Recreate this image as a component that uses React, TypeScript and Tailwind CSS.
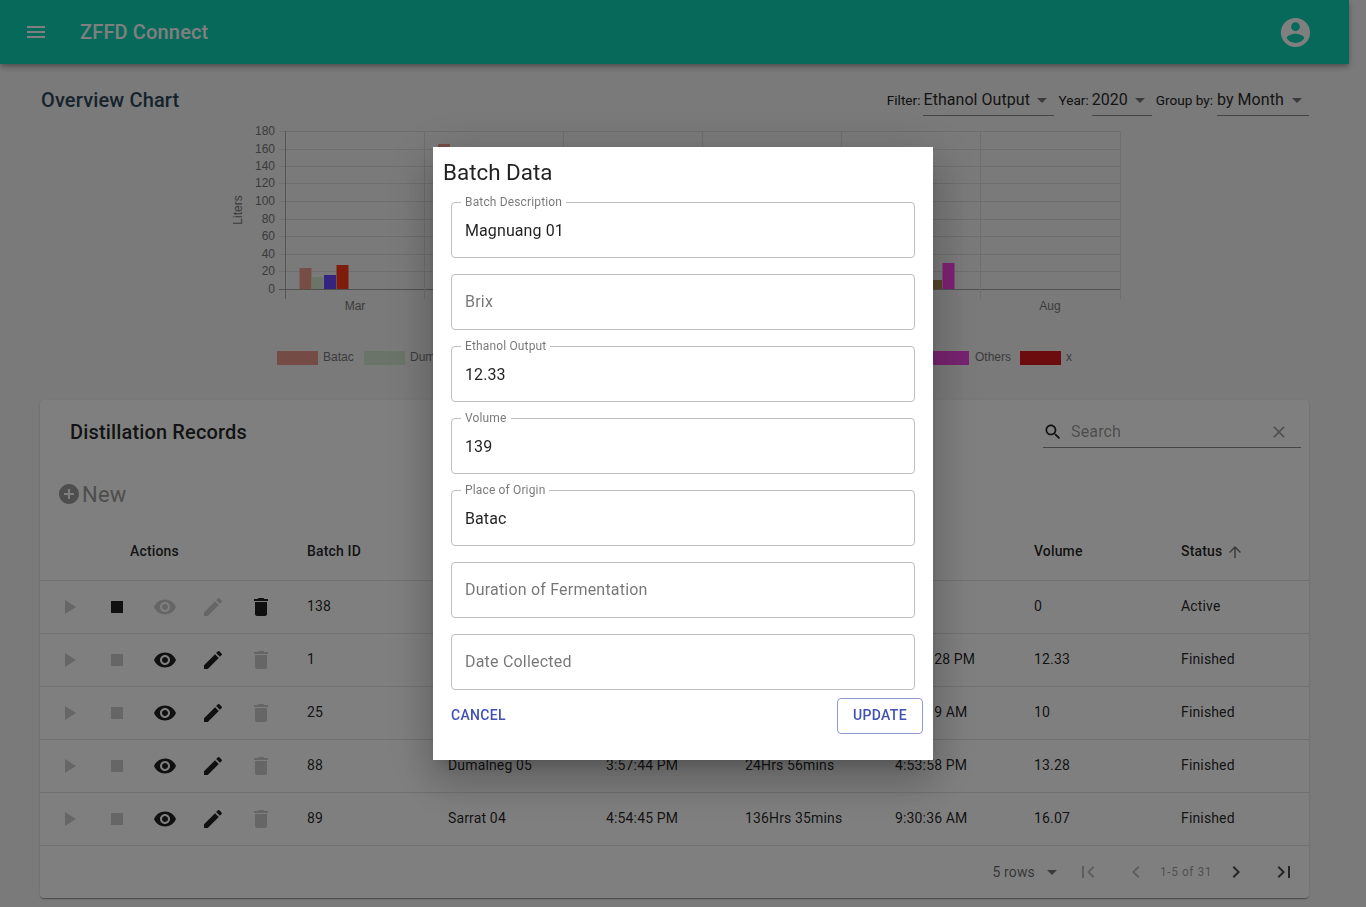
const FONT = "font-['Roboto','Liberation_Sans',sans-serif]";

// ─── Icons (material paths) ──────────────────────────────────────────────────
const P = {
  menu: "M3 18h18v-2H3v2zm0-5h18v-2H3v2zm0-7v2h18V6H3z",
  account:
    "M12 2C6.48 2 2 6.48 2 12s4.48 10 10 10 10-4.48 10-10S17.52 2 12 2zm0 3c1.66 0 3 1.34 3 3s-1.34 3-3 3-3-1.34-3-3 1.34-3 3-3zm0 14.2c-2.5 0-4.71-1.28-6-3.22.03-1.99 4-3.08 6-3.08 1.99 0 5.97 1.09 6 3.08-1.29 1.94-3.5 3.22-6 3.22z",
  drop: "M7 10l5 5 5-5z",
  search:
    "M15.5 14h-.79l-.28-.27C15.41 12.59 16 11.11 16 9.5 16 5.91 13.09 3 9.5 3S3 5.91 3 9.5 5.91 16 9.5 16c1.61 0 3.09-.59 4.23-1.57l.27.28v.79l5 4.99L20.49 19l-4.99-5zm-6 0C7.01 14 5 11.99 5 9.5S7.01 5 9.5 5 14 7.01 14 9.5 11.99 14 9.5 14z",
  clear:
    "M19 6.41L17.59 5 12 10.59 6.41 5 5 6.41 10.59 12 5 17.59 6.41 19 12 13.41 17.59 19 19 17.59 13.41 12z",
  add: "M12 2C6.48 2 2 6.48 2 12s4.48 10 10 10 10-4.48 10-10S17.52 2 12 2zm5 11h-4v4h-2v-4H7v-2h4V7h2v4h4v2z",
  up: "M4 12l1.41 1.41L11 7.83V20h2V7.83l5.58 5.59L20 12l-8-8-8 8z",
  play: "M8 5v14l11-7z",
  stop: "M6 6h12v12H6z",
  eye: "M12 4.5C7 4.5 2.73 7.61 1 12c1.73 4.39 6 7.5 11 7.5s9.27-3.11 11-7.5c-1.73-4.39-6-7.5-11-7.5zM12 17c-2.76 0-5-2.24-5-5s2.24-5 5-5 5 2.24 5 5-2.24 5-5 5zm0-8c-1.66 0-3 1.34-3 3s1.34 3 3 3 3-1.34 3-3-1.34-3-3-3z",
  edit: "M3 17.25V21h3.75L17.81 9.94l-3.75-3.75L3 17.25zM20.71 7.04c.39-.39.39-1.02 0-1.41l-2.34-2.34c-.39-.39-1.02-.39-1.41 0l-1.83 1.83 3.75 3.75 1.83-1.83z",
  trash: "M6 19c0 1.1.9 2 2 2h8c1.1 0 2-.9 2-2V7H6v12zM19 4h-3.5l-1-1h-5l-1 1H5v2h14V4z",
  first: "M18.41 16.59L13.82 12l4.59-4.59L17 6l-6 6 6 6zM6 6h2v12H6z",
  prev: "M15.41 7.41L14 6l-6 6 6 6 1.41-1.41L10.83 12z",
  next: "M10 6L8.59 7.41 13.17 12l-4.58 4.59L10 18l6-6z",
  last: "M5.59 7.41L10.18 12l-4.59 4.59L7 18l6-6-6-6zM16 6h2v12h-2z",
};

function Icon({ d, size = 24, className = "" }: { d: string; size?: number; className?: string }) {
  return (
    <svg width={size} height={size} viewBox="0 0 24 24" fill="currentColor" className={`shrink-0 ${className}`}>
      <path d={d} />
    </svg>
  );
}

// ─── Chart ───────────────────────────────────────────────────────────────────
const TICKS = [
  [180, 131],
  [160, 149],
  [140, 166],
  [120, 183],
  [100, 201],
  [80, 219],
  [60, 236],
  [40, 254],
  [20, 271],
  [0, 289],
];
const VLINES = [285.5, 424.5, 563.5, 702.5, 841.5, 980.5, 1120.5];
const BARS = [
  [299.5, 268, 12, "#ec9c8c"],
  [311.5, 277, 12, "#d5e8d0"],
  [324, 275, 12, "#6a48ff"],
  [336.5, 265, 12, "#ff3a18"],
  [438, 144, 12, "#ec9c8c"],
  [925, 280, 17, "#a88f50"],
  [942.5, 263, 12, "#ff40e8"],
] as const;
const LEGEND = [
  [277, "Batac", "#e8998a", 323],
  [364, "Dumalneg", "#d5e8d0", 410],
  [928, "Others", "#ef46e0", 975],
  [1020, "x", "#d8181f", 1066],
] as const;

function Chart() {
  return (
    <svg width={1269} height={260} viewBox="40 120 1269 260" className="block mt-1" fontFamily="'Liberation Sans',sans-serif" fontSize={12} fill="#777">
      {TICKS.map(([t, y]) => (
        <g key={t}>
          <line x1={279} x2={1120.5} y1={y + 0.5} y2={y + 0.5} stroke={t === 0 ? "#a0a0a0" : "#dcdcdc"} />
          <text x={275} y={y + 4} textAnchor="end">{t}</text>
        </g>
      ))}
      {VLINES.map((x) => (
        <line key={x} x1={x} x2={x} y1={131} y2={299} stroke={x === 285.5 ? "#a8a8a8" : "#dcdcdc"} />
      ))}
      {BARS.map(([x, y, w, c]) => (
        <rect key={x} x={x} y={y} width={w} height={289 - y} fill={c} />
      ))}
      <text x={355} y={310} textAnchor="middle">Mar</text>
      <text x={1050} y={310} textAnchor="middle">Aug</text>
      <text transform="translate(242 210) rotate(-90)" textAnchor="middle">Liters</text>
      {LEGEND.map(([x, label, c, tx]) => (
        <g key={label}>
          <rect x={x} y={351} width={41} height={14} fill={c} />
          <text x={tx} y={361}>{label}</text>
        </g>
      ))}
    </svg>
  );
}

// ─── Top filters ─────────────────────────────────────────────────────────────
function Filter({ label, value, w, labelClass = "mr-[3px]" }: { label: string; value: string; w: string; labelClass?: string }) {
  return (
    <div className="flex items-end whitespace-nowrap">
      <span className={`text-[13.6px] leading-[24px] mb-[4px] text-[#222] ${labelClass}`}>{label}</span>
      <div className={`flex items-center justify-between border-b border-[#8a8a8a] h-[32px] ${w}`}>
        <span className="text-[16px] tracking-[0.05px] leading-[24px] pt-[1px] text-[#2b2b2b]">{value}</span>
        <Icon d={P.drop} className="text-[#757575]" />
      </div>
    </div>
  );
}

// ─── Table ───────────────────────────────────────────────────────────────────
const COLS = "grid grid-cols-[90px_177px_141px_158px_139px_150px_139px_147px_128px]";

type Row = { id: string; name: string; start: string; dur: string; end: string; vol: string; status: string; active?: boolean };
const ROWS: Row[] = [
  { id: "138", name: "", start: "", dur: "", end: "", vol: "0", status: "Active", active: true },
  { id: "1", name: "", start: "", dur: "", end: "10:31:28 PM", vol: "12.33", status: "Finished" },
  { id: "25", name: "", start: "", dur: "", end: "9:22:19 AM", vol: "10", status: "Finished" },
  { id: "88", name: "Dumalneg 05", start: "3:57:44 PM", dur: "24Hrs 56mins", end: "4:53:58 PM", vol: "13.28", status: "Finished" },
  { id: "89", name: "Sarrat 04", start: "4:54:45 PM", dur: "136Hrs 35mins", end: "9:30:36 AM", vol: "16.07", status: "Finished" },
];

function RowActions({ active }: { active?: boolean }) {
  const on = "text-black/[.87]";
  const off = "text-black/[.2]";
  return (
    <div className="flex items-center gap-6 pl-[17px] -mr-[100px]">
      <Icon d={P.play} className={off} />
      <Icon d={P.stop} className={active ? on : off} />
      <Icon d={P.eye} className={active ? off : on} />
      <Icon d={P.edit} className={active ? off : on} />
      <Icon d={P.trash} className={active ? on : off} />
    </div>
  );
}

function Table() {
  return (
    <div className="text-[14px] tracking-[0.15px] text-black/[.87]">
      <div className={`${COLS} h-[58px] items-center font-medium border-b border-[#e0e0e0]`}>
        <span />
        <span className="pb-[1px]">Actions</span>
        <span>Batch ID</span>
        <span>Description</span>
        <span>Start</span>
        <span>Duration</span>
        <span>End</span>
        <span>Volume</span>
        <span className="flex items-center gap-[4px]">
          Status
          <Icon d={P.up} size={18} className="text-black/[.54]" />
        </span>
      </div>
      {ROWS.map((r) => (
        <div key={r.id} className={`${COLS} h-[53px] items-center border-b border-[#e0e0e0]`}>
          <RowActions active={r.active} />
          <span />
          <span className="-mt-[2px]">{r.id}</span>
          <span className="-mt-[2px]">{r.name}</span>
          <span className="-mt-[2px]">{r.start}</span>
          <span className="-mt-[2px]">{r.dur}</span>
          <span className="-mt-[2px]">{r.end}</span>
          <span className="-mt-[2px]">{r.vol}</span>
          <span className="-mt-[2px]">{r.status}</span>
        </div>
      ))}
    </div>
  );
}

function Pager() {
  const off = "text-black/[.26]";
  return (
    <div className="h-[52px] flex items-center justify-end pr-[13px] text-black/[.6]">
      <span className="text-[14px] tracking-[0.15px] mr-[5px]">5 rows</span>
      <Icon d={P.drop} className="text-black/[.54]" />
      <Icon d={P.first} className={`${off} ml-[12px]`} />
      <Icon d={P.prev} className={`${off} ml-[24px]`} />
      <span className="text-[12px] tracking-[0.5px] text-black/[.4] w-[76px] text-center shrink-0">1-5 of 31</span>
      <Icon d={P.next} className="text-black/[.7]" />
      <Icon d={P.last} className="text-black/[.7] ml-[24px]" />
    </div>
  );
}

// ─── Dialog ──────────────────────────────────────────────────────────────────
function Field({ label, value }: { label: string; value?: string }) {
  return (
    <div className="relative h-[56px] rounded-[4px] border border-[#bfbfbf] flex items-center pl-[13px]">
      {value ? (
        <>
          <span className="absolute -top-[8px] left-[9px] px-[4px] bg-white text-[12px] leading-[14px] tracking-[0.15px] text-black/[.54]">{label}</span>
          <span className="pt-[2px] text-[16px] tracking-[0.1px] text-black/[.87]">{value}</span>
        </>
      ) : (
        <span className="text-[16px] tracking-[0.2px] text-black/[.54]">{label}</span>
      )}
    </div>
  );
}

function BatchDialog() {
  return (
    <div className="fixed inset-0 bg-black/50 flex items-center justify-center">
      <div className="w-[500px] h-[613px] bg-white pt-[9px] shadow-[0_11px_15px_-7px_rgba(0,0,0,.2),0_24px_38px_3px_rgba(0,0,0,.14),0_9px_46px_8px_rgba(0,0,0,.12)]">
        <h2 className="pl-[10px] text-[22.4px] leading-[32px] text-black/[.87]">Batch Data</h2>
        <div className="mx-[18px] mt-[14px] flex flex-col gap-4">
          <Field label="Batch Description" value="Magnuang 01" />
          <Field label="Brix" />
          <Field label="Ethanol Output" value="12.33" />
          <Field label="Volume" value="139" />
          <Field label="Place of Origin" value="Batac" />
          <Field label="Duration of Fermentation" />
          <Field label="Date Collected" />
        </div>
        <div className="mt-[8px] pl-[18px] pr-[10px] flex items-center justify-between text-[14px] font-medium tracking-[0.3px] text-[#3f51b5]">
          <span className="pb-[2px]">CANCEL</span>
          <span className="h-[36px] w-[86px] pb-[2px] flex items-center justify-center rounded-[4px] border border-[#3f51b5]/60">UPDATE</span>
        </div>
      </div>
    </div>
  );
}

// ─── Main ────────────────────────────────────────────────────────────────────
export default function App() {
  return (
    <div className={`${FONT} min-h-screen bg-[#f5f5f5]`}>
      <div className="w-[1349px]">
        <header className="h-16 bg-[#0ed2b4] text-white flex items-center pl-6 pr-[36px] shadow-[0_2px_4px_-1px_rgba(0,0,0,.2),0_4px_5px_0_rgba(0,0,0,.14),0_1px_10px_0_rgba(0,0,0,.12)]">
          <Icon d={P.menu} />
          <h1 className="ml-8 text-[20px] font-medium tracking-[0.15px] flex-1">ZFFD Connect</h1>
          <Icon d={P.account} size={35} />
        </header>

        <main className="px-10">
          <div className="mt-[20px] h-[32px] flex items-end justify-between">
            <h2 className="pl-px self-center text-[20px] font-medium tracking-[0.15px] text-[#2e4658]">Overview Chart</h2>
            <div className="flex items-end gap-1">
              <Filter label="Filter:" value="Ethanol Output" w="w-[131px]" />
              <Filter label="Year:" value="2020" w="w-[60px]" />
              <Filter label="Group by:" value="by Month" w="w-[92px]" labelClass="mr-[4px]" />
            </div>
          </div>

          <Chart />

          <section className="mt-[20px] mb-[9px] rounded-[4px] bg-white shadow-[0_2px_1px_-1px_rgba(0,0,0,.2),0_1px_1px_0_rgba(0,0,0,.14),0_1px_3px_0_rgba(0,0,0,.12)]">
            <div className="h-[64px] pl-[30px] pr-2 flex items-center justify-between">
              <h2 className="text-[20px] font-medium tracking-[0.15px] text-black/[.87]">Distillation Records</h2>
              <div className="w-[258px] h-[32px] border-b border-[#8a8a8a] flex items-center text-black/[.87]">
                <Icon d={P.search} size={20} />
                <span className="ml-[8px] flex-1 text-[16px] tracking-[0.15px] text-black/[.42]">Search</span>
                <Icon d={P.clear} size={20} className="text-black/[.38] mr-[12px]" />
              </div>
            </div>
            <div className="h-[59px] pl-[17px] pt-[1px] flex items-center">
              <Icon d={P.add} className="text-[#9c9c9c]" />
              <span className="ml-px text-[22px] tracking-[0.2px] text-[#9a9a9a]">New</span>
            </div>
            <Table />
            <Pager />
          </section>
        </main>
      </div>
      <BatchDialog />
    </div>
  );
}
